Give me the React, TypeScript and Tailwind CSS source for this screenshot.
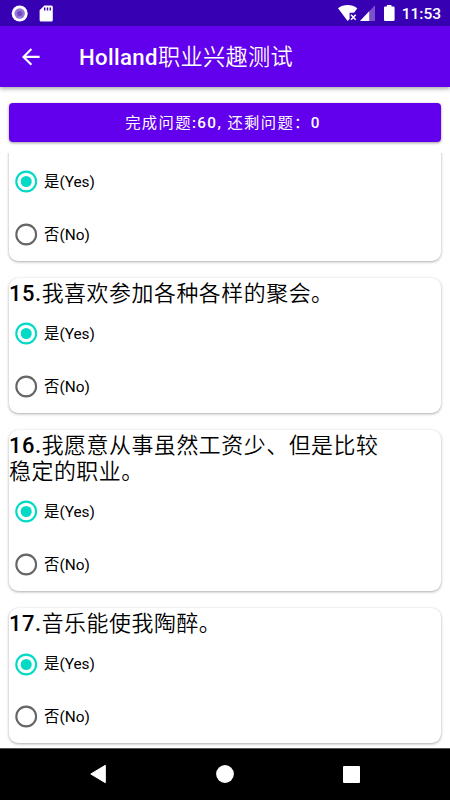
import React, { useState } from 'react';

interface Question {
  id: number;
  lines: string[];
}

const QUESTIONS: Question[] = [
  { id: 15, lines: ['我喜欢参加各种各样的聚会。'] },
  { id: 16, lines: ['我愿意从事虽然工资少、但是比较', '稳定的职业。'] },
  { id: 17, lines: ['音乐能使我陶醉。'] },
];

const StatusBar: React.FC = () => (
  <div className="flex h-[26px] shrink-0 items-center justify-between bg-[#3700b3] pl-[11px] pr-[9px] text-white">
    <div className="flex items-center gap-[11px]">
      <svg width="17" height="17" viewBox="0 0 17 17">
        <circle cx="8.7" cy="8.5" r="8" fill="#fff" />
        <circle cx="8.7" cy="8.5" r="5.2" fill="#9575d8" />
        <circle cx="8.7" cy="8.5" r="2.6" fill="#7047c4" />
      </svg>
      <svg width="14" height="17" viewBox="0 0 14 17">
        <path d="M5.4 .5H12.4Q13.8 .5 13.8 2V15Q13.8 16.5 12.4 16.5H2Q.6 16.5 .6 15V5.2Z" fill="#fff" />
        <path d="M5.7 2.5V5.5M8.5 2.5V5.5M11.3 2.5V5.5" stroke="#3700b3" strokeWidth="1.4" />
      </svg>
    </div>
    <div className="flex items-center">
      <svg width="57" height="18" viewBox="0 0 57 18">
        <path d="M0 4.3C5.7 0 13.6 0 19.3 4.3L16 8.7H11.6V15L9.6 17Z" fill="#fff" />
        <path d="M13 10.7L17.7 15.8M17.7 10.7L13 15.8" stroke="#fff" strokeWidth="1.5" />
        <path d="M22 17L37 1.2V17Z" fill="#7a53cc" />
        <path d="M22 17L31.2 7.3V17Z" fill="#fff" />
        <path d="M48.9 1.1H53.4V2.5H55.4Q56.6 2.5 56.6 3.7V15.8Q56.6 17 55.4 17H47.1Q46 17 46 15.8V3.7Q46 2.5 47.1 2.5H48.9Z" fill="#fff" />
      </svg>
      <span className="ml-[7px] mt-[3px] text-[15.5px] font-medium leading-none">11:53</span>
    </div>
  </div>
);

const AppBar: React.FC = () => (
  <header className="relative z-10 flex h-[61px] shrink-0 items-center bg-[#6200ee] pl-[22px] text-white shadow-[0_2px_4px_rgba(0,0,0,0.32)]">
    <button aria-label="Back">
      <svg width="18" height="18" viewBox="0 0 18 18" fill="none" stroke="#fff" strokeWidth="2.1">
        <path d="M17.6 8.9H1.8M9.4 1L1.5 8.9L9.4 16.8" />
      </svg>
    </button>
    <h1 className="ml-[39px] mt-[2px] text-[22.2px] font-medium tracking-[0.35px] leading-none">
      Holland<span className="font-[350]">职业兴趣测试</span>
    </h1>
  </header>
);

interface OptionProps {
  label: string;
  checked: boolean;
  onSelect: () => void;
}

const Option: React.FC<OptionProps> = ({ label, checked, onSelect }) => (
  <button
    role="radio"
    aria-checked={checked}
    onClick={onSelect}
    className="flex h-[52.5px] w-full items-center pl-[6px] text-left"
  >
    <svg width="23" height="23" viewBox="0 0 23 23" fill="none">
      <circle cx="11.2" cy="11.5" r="9.9" stroke={checked ? '#03dac5' : '#666'} strokeWidth="2.1" />
      {checked && <circle cx="11.2" cy="11.5" r="5.5" fill="#03dac5" />}
    </svg>
    <span className="ml-[6px] mt-[2px] text-[15.4px] leading-none">{label}</span>
  </button>
);

const QuestionCard: React.FC<{ question?: Question }> = ({ question }) => {
  const [answer, setAnswer] = useState('yes');

  return (
    <section className="shrink-0 rounded-[9px] bg-white shadow-[0_1px_3px_rgba(0,0,0,0.32),0_0_1px_rgba(0,0,0,0.1)]">
      {question ? (
        <h2 className="pb-[1px] pt-[3px] text-[21.9px] tracking-[0.56px] leading-[25.7px]">
          {question.lines.map((line, i) => (
            <span key={line} className="block whitespace-nowrap font-[350]">
              {i === 0 && <span className="font-medium">{question.id}.</span>}
              {line}
            </span>
          ))}
        </h2>
      ) : (
        <div className="h-[30px]" />
      )}
      <div role="radiogroup">
        <Option label="是(Yes)" checked={answer === 'yes'} onSelect={() => setAnswer('yes')} />
        <Option label="否(No)" checked={answer === 'no'} onSelect={() => setAnswer('no')} />
      </div>
    </section>
  );
};

const NavigationBar: React.FC = () => (
  <nav className="flex h-[52.5px] shrink-0 items-center justify-between border-t border-[#555] bg-black px-[90px]">
    <svg width="17" height="20" viewBox="0 0 17 20">
      <path d="M15.3 1.3V18.7L.8 10Z" fill="#fff" stroke="#fff" strokeWidth="1" strokeLinejoin="round" />
    </svg>
    <svg width="18" height="18" viewBox="0 0 18 18">
      <circle cx="9" cy="9" r="8.9" fill="#fff" />
    </svg>
    <svg width="17" height="17" viewBox="0 0 17 17">
      <rect width="17" height="17" rx="1" fill="#fff" />
    </svg>
  </nav>
);

export default function App() {
  return (
    <div className="flex h-[800px] w-[450px] flex-col overflow-hidden bg-white font-[Roboto,'Noto_Sans_CJK_SC',sans-serif] text-black" lang="zh-CN">
      <StatusBar />
      <AppBar />
      <main className="flex min-h-0 flex-1 flex-col">
        <button className="mx-[9px] mt-4 h-[39px] shrink-0 rounded-[4px] bg-[#6200ee] pr-1 pt-[2px] text-[15.3px] font-medium tracking-[1.37px] text-white shadow-[0_1px_3px_rgba(0,0,0,0.4)]">
          <span className="font-normal">完成问题</span>:60, <span className="font-normal">还剩问题：</span>0
        </button>
        <div className="mt-[11px] flex min-h-0 flex-1 flex-col gap-[17.5px] overflow-hidden px-[9px]">
          {/* question 14, scrolled so that only its options show */}
          <div className="-mt-[27.5px] shrink-0">
            <QuestionCard />
          </div>
          {QUESTIONS.map((q) => (
            <QuestionCard key={q.id} question={q} />
          ))}
        </div>
      </main>
      <NavigationBar />
    </div>
  );
}
